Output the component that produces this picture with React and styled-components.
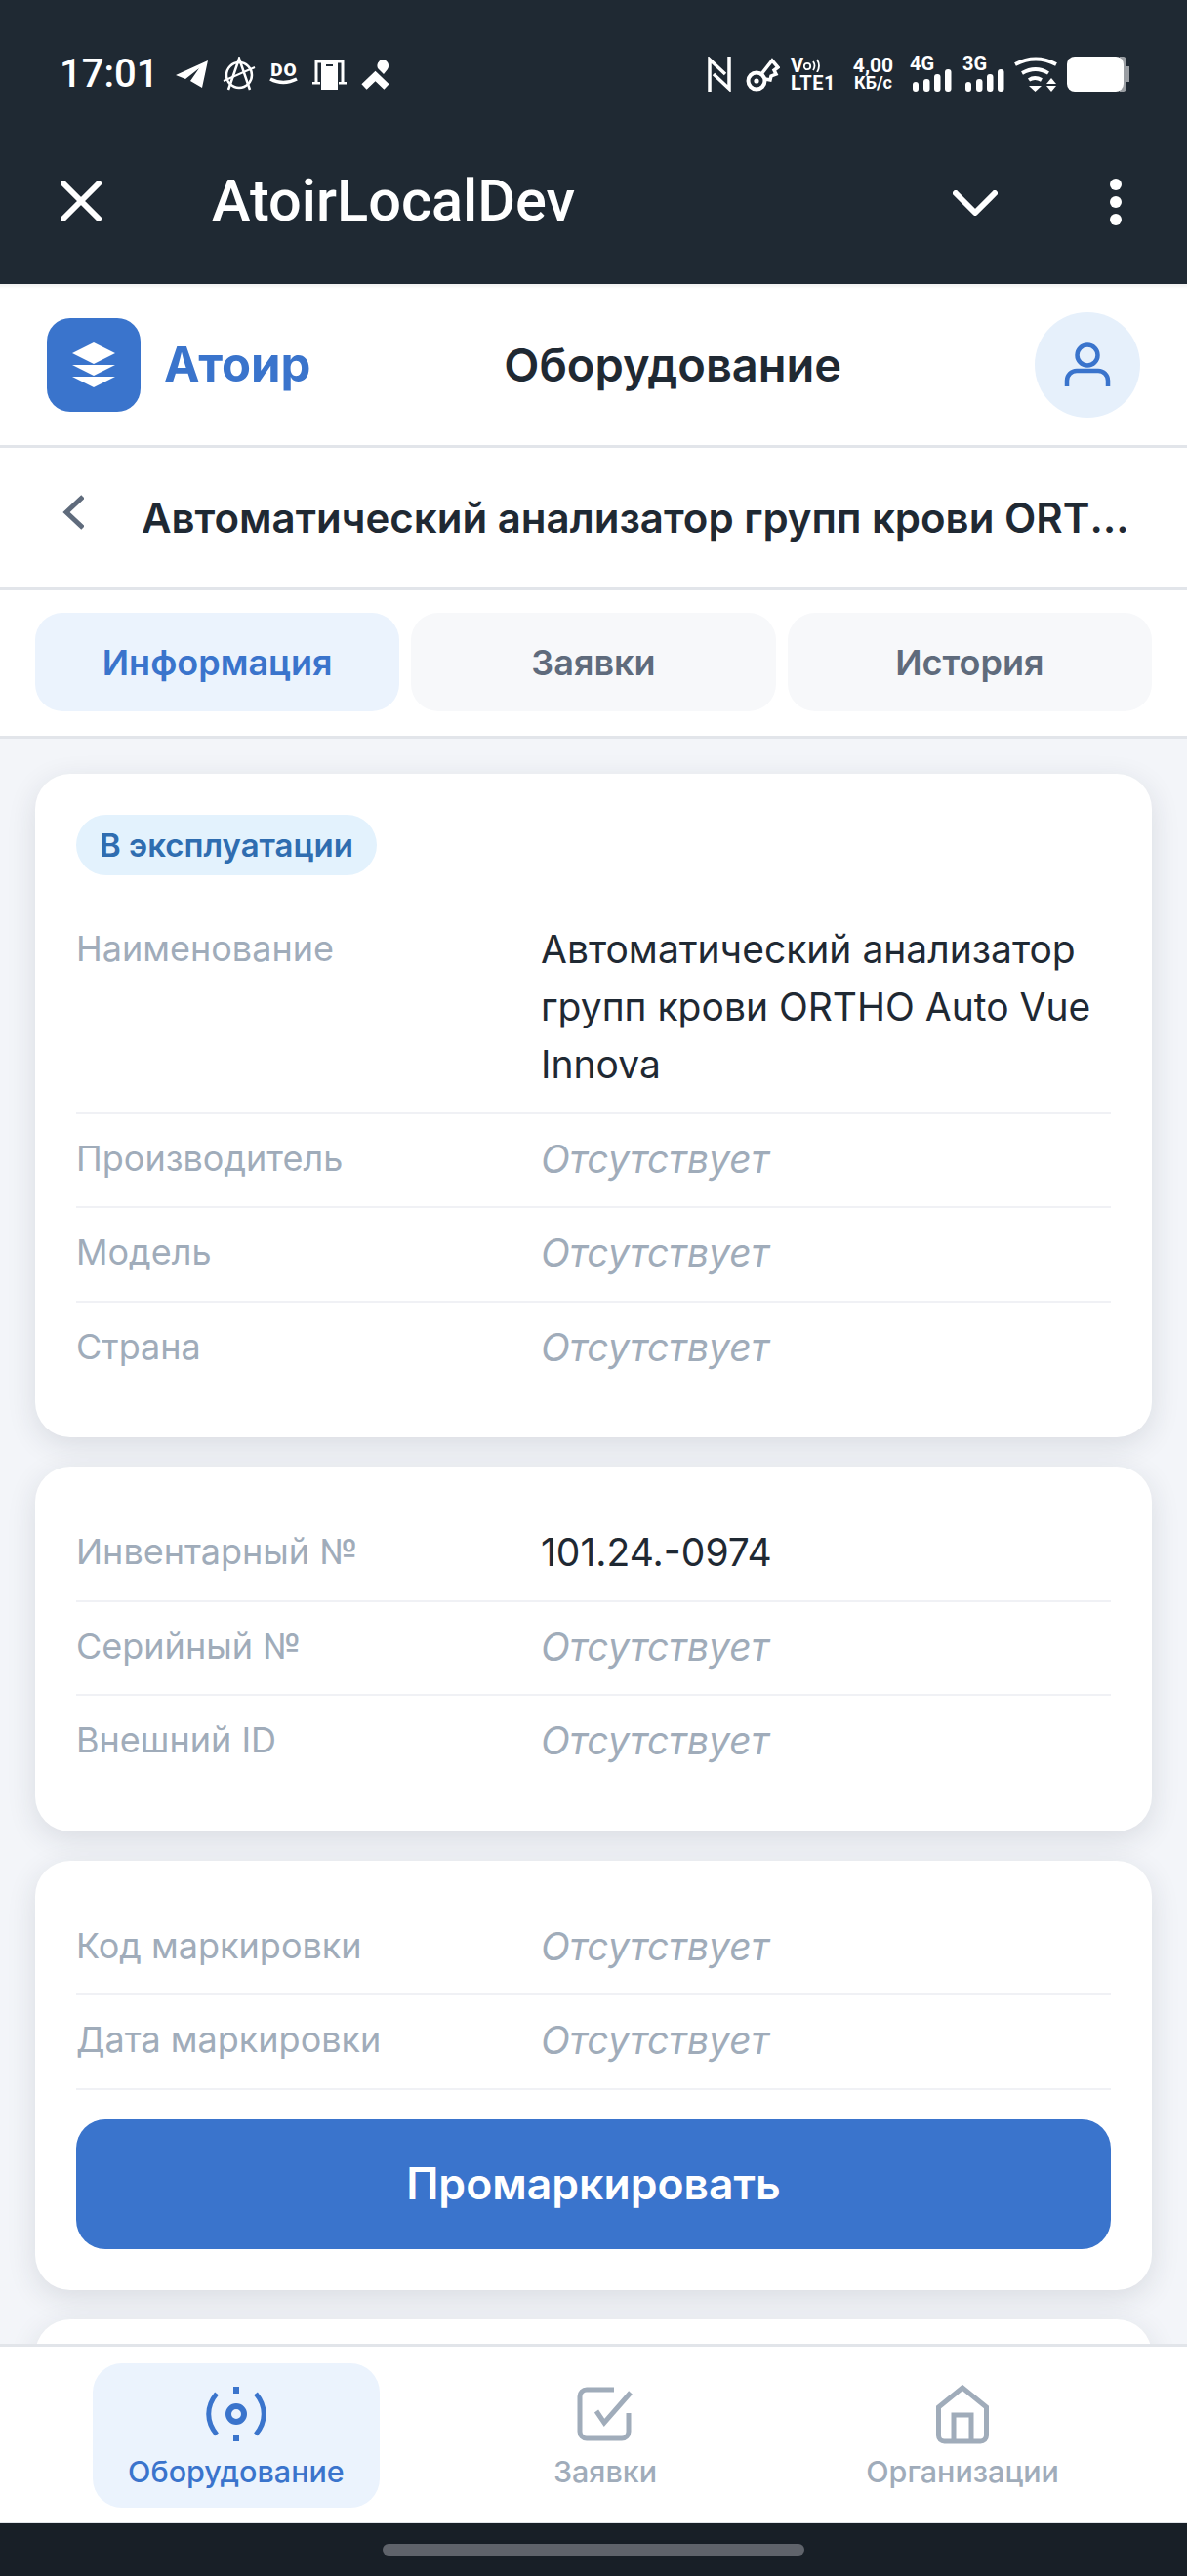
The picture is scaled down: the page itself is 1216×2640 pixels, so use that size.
import React from 'react';
import styled, { createGlobalStyle } from 'styled-components';

const GlobalStyle = createGlobalStyle`
  html, body {
    margin: 0;
    padding: 0;
    background: #f3f5f9;
  }
  * {
    box-sizing: border-box;
  }
`;

const Page = styled.div`
  width: 1216px;
  height: 2640px;
  display: flex;
  flex-direction: column;
  overflow: hidden;
  font-family: Inter, 'Noto Sans', sans-serif;
  color: #1f2933;
`;

const DarkTop = styled.div`
  flex: none;
  height: 291px;
  background: #1f2933;
  color: #fff;
`;

const StatusBar = styled.div`
  height: 121px;
  padding: 58px 59px 0 61px;
  display: flex;
  justify-content: space-between;
  align-items: flex-start;
  font-family: Roboto, sans-serif;
`;

const StatusGroup = styled.div`
  display: flex;
  align-items: center;
  height: 36px;
`;

const Time = styled.span`
  font-size: 40px;
  font-weight: 500;
  line-height: 36px;
  margin-right: 18px;
`;

const StatusIcon = styled.svg`
  display: block;
  flex: none;
  margin-left: ${({ $left }) => $left || 0}px;
  fill: #fff;
`;

const StackText = styled.div`
  width: ${({ $width }) => $width}px;
  margin-left: ${({ $left }) => $left}px;
  display: flex;
  flex-direction: column;
  align-items: ${({ $center }) => ($center ? 'center' : 'flex-start')};
  font-weight: 700;
  font-size: 18px;
  line-height: 18px;
  white-space: nowrap;
`;

const LteText = styled.span`
  font-size: 20px;
  letter-spacing: 0.6px;
`;

const SpeedTop = styled.span`
  font-size: 21px;
`;

const SignalBox = styled.div`
  position: relative;
  flex: none;
  width: 43px;
  height: 36px;
  margin-left: ${({ $left }) => $left}px;

  span {
    position: absolute;
    left: 0;
    top: -2px;
    font-size: 20px;
    font-weight: 700;
    line-height: 19px;
  }
`;

const AppBar = styled.div`
  height: 170px;
  padding: 0 62px;
  display: flex;
  align-items: center;
`;

const AppTitle = styled.div`
  flex: 1;
  margin-left: 113px;
  font-family: Roboto, sans-serif;
  font-size: 59.5px;
  font-weight: 500;
  line-height: 70px;
`;

const BarIcon = styled.svg`
  display: block;
  flex: none;
  stroke: #fff;
  fill: none;
  stroke-width: 6;
  stroke-linecap: round;
  stroke-linejoin: round;
`;

const ChevronIcon = styled(BarIcon)`
  margin-top: 4px;
  margin-right: 0;
`;

const Dots = styled.div`
  margin-left: 115px;
  margin-right: 5px;
  margin-top: 2px;
  display: flex;
  flex-direction: column;
  gap: 6px;

  span {
    display: block;
    width: 12px;
    height: 12px;
    border-radius: 50%;
    background: #fff;
  }
`;

const Header = styled.header`
  flex: none;
  height: 168px;
  padding: 0 48px;
  display: flex;
  align-items: center;
  justify-content: space-between;
  background: #fff;
  border-bottom: 3px solid #e2e5ea;
  box-shadow: inset 0 5px 3px -2px rgba(0, 0, 0, 0.05);
`;

const Brand = styled.div`
  display: flex;
  align-items: center;
  gap: 24px;
`;

const LogoBox = styled.div`
  width: 96px;
  height: 96px;
  border-radius: 24px;
  background: #3a74cc;
  svg {
    display: block;
  }
`;

const BrandName = styled.span`
  font-size: 49px;
  font-weight: 700;
  color: #3a74cc;
`;

const ScreenTitle = styled.h1`
  margin: 0;
  font-size: 47px;
  font-weight: 600;
  color: #1f2933;
`;

const Avatar = styled.div`
  width: 108px;
  height: 108px;
  border-radius: 50%;
  background: #e6f0fb;
  display: flex;
  align-items: center;
  justify-content: center;
`;

const TitleRow = styled.div`
  flex: none;
  height: 146px;
  padding: 0 48px 0 62px;
  display: flex;
  align-items: center;
  gap: 59px;
  background: #fff;
  border-bottom: 3px solid #e2e5ea;
`;

const BackIcon = styled.svg`
  flex: none;
  margin-bottom: 11px;
  fill: none;
  stroke: #5f6b7c;
  stroke-width: 5;
`;

const EquipmentTitle = styled.div`
  flex: 1;
  min-width: 0;
  font-size: 42px;
  font-weight: 600;
  white-space: nowrap;
  overflow: hidden;
  text-overflow: ellipsis;
`;

const TabBar = styled.div`
  flex: none;
  height: 152px;
  padding: 23px 36px 25px;
  display: grid;
  grid-template-columns: repeat(3, 1fr);
  gap: 12px;
  background: #fff;
  border-bottom: 3px solid #e2e5ea;
`;

const Tab = styled.div`
  display: flex;
  align-items: center;
  justify-content: center;
  border-radius: 28px;
  font-size: 36px;
  font-weight: 600;
  background: ${({ $active }) => ($active ? '#ebf3fd' : '#f7f8fa')};
  color: ${({ $active }) => ($active ? '#3a74cc' : '#5f6b7c')};
`;

const Content = styled.main`
  flex: 1;
  min-height: 0;
  overflow: hidden;
  padding: 36px;
  display: flex;
  flex-direction: column;
  gap: 30px;
  background: #f3f5f9;
`;

const Card = styled.section`
  flex: none;
  padding: 42px;
  min-height: ${({ $min }) => $min || 0}px;
  border-radius: 36px;
  background: #fff;
  box-shadow: 0 8px 30px rgba(30, 40, 60, 0.12);
`;

const Badge = styled.span`
  display: inline-flex;
  align-items: center;
  height: 62px;
  padding: 0 24px;
  margin-bottom: 30px;
  border-radius: 31px;
  background: #e3f2fd;
  color: #2f6db0;
  font-size: 33px;
  font-weight: 600;
  vertical-align: top;
`;

const Row = styled.div`
  display: grid;
  grid-template-columns: 476px 1fr;
  padding: 16px 0 ${({ $last }) => ($last ? 21.5 : 19.5)}px;
  border-bottom: ${({ $last }) => ($last ? 'none' : '2.5px solid #f0f1f5')};
  line-height: 59px;
`;

const Label = styled.div`
  font-size: 36px;
  color: #a0acba;
`;

const Value = styled.div`
  font-size: 39px;
  color: #1f2933;
`;

const Missing = styled.div`
  font-size: 39px;
  color: #a0acba;
  font-style: italic;
`;

const MarkButton = styled.button`
  display: block;
  width: 100%;
  height: 133px;
  margin-top: 30px;
  border: none;
  border-radius: 30px;
  background: #3a74cc;
  color: #fff;
  font-family: inherit;
  font-size: 44.5px;
  font-weight: 600;
`;

const BottomNav = styled.nav`
  flex: none;
  height: 183px;
  padding: 17px 24px 15px;
  display: flex;
  justify-content: space-around;
  background: #fff;
  border-top: 3px solid #e2e5ea;
  position: relative;
`;

const NavItem = styled.div`
  padding: 20px 36px 0;
  border-radius: 30px;
  display: flex;
  flex-direction: column;
  align-items: center;
  background: ${({ $active }) => ($active ? '#ebf3fd' : 'transparent')};
  color: ${({ $active }) => ($active ? '#3a74cc' : '#a0acba')};
`;

const NavIconSlot = styled.div`
  height: 64px;
  display: flex;
  align-items: center;
  justify-content: center;
`;

const NavIcon = styled.svg`
  display: block;
  fill: none;
  stroke: currentColor;
  stroke-width: 5;
`;

const NavLabel = styled.span`
  margin-top: 9px;
  font-size: 30.5px;
  font-weight: 500;
  line-height: 36px;
  white-space: nowrap;
`;

const GestureBar = styled.div`
  flex: none;
  height: 55px;
  padding-top: 21px;
  display: flex;
  justify-content: center;
  background: #181f27;
  border-top: 1px solid #e2e5ea;
`;

const GestureHandle = styled.div`
  width: 432px;
  height: 12px;
  border-radius: 6px;
  background: #5f636b;
`;

const DoBox = styled.div`
  flex: none;
  width: 29px;
  height: 24px;
  margin-left: 13px;
  display: flex;
  flex-direction: column;
  align-items: center;
  font-size: 19px;
  font-weight: 900;
  line-height: 15px;
  letter-spacing: 1px;

  svg {
    display: block;
  }
`;

const VoRow = styled.div`
  display: flex;
  align-items: center;
  font-size: 20px;
  height: 18px;
`;

const Telegram = () => (
  <StatusIcon width="33" height="28" viewBox="0 0 33 28">
    <polygon points="0,15 33,0 27,28 15,21 24,8 10,19" />
  </StatusIcon>
);

const Anarchy = () => (
  <StatusIcon $left={14} width="36" height="36" viewBox="0 0 36 36">
    <g fill="none" stroke="#fff" strokeWidth="2.5">
      <circle cx="18" cy="19" r="13" />
      <path d="M7 34 L18 2 L29 34" />
      <path d="M2 25 L34 11" strokeWidth="2" />
    </g>
  </StatusIcon>
);

const DoFace = () => (
  <DoBox>
    <span>DO</span>
    <svg width="29" height="9" viewBox="0 0 29 9">
      <path d="M1 2 Q14 9 28 2" fill="none" stroke="#fff" strokeWidth="3.5" />
    </svg>
  </DoBox>
);

const PhoneGate = () => (
  <StatusIcon $left={15} width="35" height="31" viewBox="0 0 35 31">
    <path d="M4 23 V2 H31 V23" fill="none" stroke="#fff" strokeWidth="3" />
    <rect x="9" y="3" width="17" height="28" />
    <rect x="14" y="5" width="7" height="2" fill="#1f2933" />
    <rect x="0" y="23" width="8" height="2.5" />
    <rect x="27" y="23" width="8" height="2.5" />
  </StatusIcon>
);

const PinChevron = () => (
  <StatusIcon $left={15} width="29" height="31" viewBox="0 0 29 31">
    <path d="M21.5 0 a6.5 6.5 0 0 1 5.5 10 l-4 5 l-6 -6 a6.5 6.5 0 0 1 4.5 -9 Z" />
    <path d="M3 28 L14.5 17 L26 28" fill="none" stroke="#fff" strokeWidth="7.5" />
  </StatusIcon>
);

const Nfc = () => (
  <StatusIcon width="24" height="36" viewBox="0 0 24 36">
    <path d="M2 36 V3 L18 18 M22 0 V33 L6 18" fill="none" stroke="#fff" strokeWidth="3.5" />
  </StatusIcon>
);

const VpnKey = () => (
  <StatusIcon $left={15} width="35" height="36" viewBox="0 0 35 36">
    <circle cx="11" cy="25" r="8.5" fill="none" stroke="#fff" strokeWidth="4" />
    <circle cx="11" cy="25" r="2.6" />
    <path d="M16 18 L27 4 L33 11 L29 14 L31 18 L26 20 L25 24 L20 23" fill="none" stroke="#fff" strokeWidth="3.5" />
  </StatusIcon>
);

const VoWaves = () => (
  <StatusIcon width="18" height="14" viewBox="0 0 18 14">
    <circle cx="4" cy="8" r="3.2" fill="none" stroke="#fff" strokeWidth="1.8" />
    <path d="M10 3 Q13 7.5 10 12 M14 1 Q18 7.5 14 14" fill="none" stroke="#fff" strokeWidth="1.8" />
  </StatusIcon>
);

const Signal = ({ label, left }) => (
  <SignalBox $left={left}>
    <StatusIcon width="43" height="36" viewBox="0 0 43 36">
      <rect x="3" y="26" width="6" height="10" rx="3" />
      <rect x="14" y="23" width="6.5" height="13" rx="3" />
      <rect x="25" y="18" width="6.5" height="18" rx="3" />
      <rect x="36" y="13" width="6.5" height="23" rx="3" />
    </StatusIcon>
    <span>{label}</span>
  </SignalBox>
);

const Wifi = () => (
  <StatusIcon $left={10} width="45" height="36" viewBox="0 0 45 36">
    <g fill="none" stroke="#fff" strokeWidth="3.8">
      <path d="M1 8 Q22 -3 43 8" />
      <path d="M8 17 Q22 9 35 17" />
      <path d="M15 24 Q21 20 28 24" />
    </g>
    <polygon points="15,30 28,30 21.5,36" />
    <polygon points="38,22 43,28 33,28" />
    <polygon points="33,30 43,30 38,36" />
  </StatusIcon>
);

const Battery = () => (
  <StatusIcon $left={9} width="64" height="36" viewBox="0 0 64 36">
    <path d="M54 0 H58 a4 4 0 0 1 3 4 V10 H64 V26 H61 V32 a4 4 0 0 1 -3 4 H54 Z" fill="#9a9ea3" />
    <rect x="0" y="0" width="58" height="36" rx="8" />
  </StatusIcon>
);

const StackLogo = () => (
  <svg width="96" height="96" viewBox="0 0 96 96">
    <g fill="#fff">
      <polygon points="48,25 70,36 48,47 26,36" />
      <polygon points="26,48 70,48 48,59" />
      <polygon points="26,60 70,60 48,71" />
    </g>
  </svg>
);

const UserIcon = () => (
  <svg width="48" height="46" viewBox="0 0 48 46" fill="none" stroke="#3a74cc" strokeWidth="4.5">
    <circle cx="24" cy="13" r="10.5" />
    <path d="M3 45 V39 a10 10 0 0 1 10 -10 H35 a10 10 0 0 1 10 10 V45" />
  </svg>
);

const RadarIcon = () => (
  <NavIcon width="62" height="56" viewBox="0 0 62 56">
    <circle cx="31" cy="28" r="8" strokeWidth="6" />
    <path d="M11 7 C0 20 0 36 11 49 M51 7 C62 20 62 36 51 49" />
    <path d="M31 0 V7 M31 49 V56" strokeWidth="6" />
  </NavIcon>
);

const CheckIcon = () => (
  <NavIcon width="58" height="56" viewBox="0 0 58 56">
    <path d="M38 3 H10 a7 7 0 0 0 -7 7 V46 a7 7 0 0 0 7 7 H46 a7 7 0 0 0 7 -7 V27" />
    <path d="M20 25 L28 37 L55 6" />
  </NavIcon>
);

const HomeIcon = () => (
  <NavIcon width="54" height="61" viewBox="0 0 54 61">
    <path d="M2.5 23 L27 3 L51.5 23 V52 a6 6 0 0 1 -6 6 H8.5 a6 6 0 0 1 -6 -6 Z" />
    <path d="M18 58 V31 H36 V58" />
  </NavIcon>
);

const firstCard = [
  { label: 'Производитель' },
  { label: 'Модель' },
  { label: 'Страна', last: true }
];

const App = () => (
  <Page>
    <GlobalStyle />
    <DarkTop>
      <StatusBar>
        <StatusGroup>
          <Time>17:01</Time>
          <Telegram />
          <Anarchy />
          <DoFace />
          <PhoneGate />
          <PinChevron />
        </StatusGroup>
        <StatusGroup>
          <Nfc />
          <VpnKey />
          <StackText $width={44} $left={11}>
            <VoRow>
              V
              <VoWaves />
            </VoRow>
            <LteText>LTE1</LteText>
          </StackText>
          <StackText $width={41} $left={20} $center>
            <SpeedTop>4,00</SpeedTop>
            <span>КБ/с</span>
          </StackText>
          <Signal label="4G" left={17} />
          <Signal label="3G" left={11} />
          <Wifi />
          <Battery />
        </StatusGroup>
      </StatusBar>
      <AppBar>
        <BarIcon width="42" height="42" viewBox="0 0 42 42">
          <path d="M3 3 L39 39 M39 3 L3 39" />
        </BarIcon>
        <AppTitle>AtoirLocalDev</AppTitle>
        <ChevronIcon width="46" height="26" viewBox="0 0 46 26">
          <path d="M3 3 L23 23 L43 3" />
        </ChevronIcon>
        <Dots>
          <span />
          <span />
          <span />
        </Dots>
      </AppBar>
    </DarkTop>

    <Header>
      <Brand>
        <LogoBox>
          <StackLogo />
        </LogoBox>
        <BrandName>Атоир</BrandName>
      </Brand>
      <ScreenTitle>Оборудование</ScreenTitle>
      <Avatar>
        <UserIcon />
      </Avatar>
    </Header>

    <TitleRow>
      <BackIcon width="24" height="36" viewBox="0 0 24 36">
        <path d="M23 2 L6 18 L23 34" />
      </BackIcon>
      <EquipmentTitle>Автоматический анализатор групп крови ORTHO Auto Vue Innova</EquipmentTitle>
    </TitleRow>

    <TabBar>
      <Tab $active>Информация</Tab>
      <Tab>Заявки</Tab>
      <Tab>История</Tab>
    </TabBar>

    <Content>
      <Card>
        <Badge>В эксплуатации</Badge>
        <Row>
          <Label>Наименование</Label>
          <Value>Автоматический анализатор групп крови ORTHO Auto Vue Innova</Value>
        </Row>
        {firstCard.map((row) => (
          <Row key={row.label} $last={row.last}>
            <Label>{row.label}</Label>
            <Missing>Отсутствует</Missing>
          </Row>
        ))}
      </Card>

      <Card>
        <Row>
          <Label>Инвентарный №</Label>
          <Value>101.24.-0974</Value>
        </Row>
        <Row>
          <Label>Серийный №</Label>
          <Missing>Отсутствует</Missing>
        </Row>
        <Row $last>
          <Label>Внешний ID</Label>
          <Missing>Отсутствует</Missing>
        </Row>
      </Card>

      <Card>
        <Row>
          <Label>Код маркировки</Label>
          <Missing>Отсутствует</Missing>
        </Row>
        <Row>
          <Label>Дата маркировки</Label>
          <Missing>Отсутствует</Missing>
        </Row>
        <MarkButton>Промаркировать</MarkButton>
      </Card>

      <Card $min={300} />
    </Content>

    <BottomNav>
      <NavItem $active>
        <NavIconSlot>
          <RadarIcon />
        </NavIconSlot>
        <NavLabel>Оборудование</NavLabel>
      </NavItem>
      <NavItem>
        <NavIconSlot>
          <CheckIcon />
        </NavIconSlot>
        <NavLabel>Заявки</NavLabel>
      </NavItem>
      <NavItem>
        <NavIconSlot>
          <HomeIcon />
        </NavIconSlot>
        <NavLabel>Организации</NavLabel>
      </NavItem>
    </BottomNav>

    <GestureBar>
      <GestureHandle />
    </GestureBar>
  </Page>
);

export default App;
